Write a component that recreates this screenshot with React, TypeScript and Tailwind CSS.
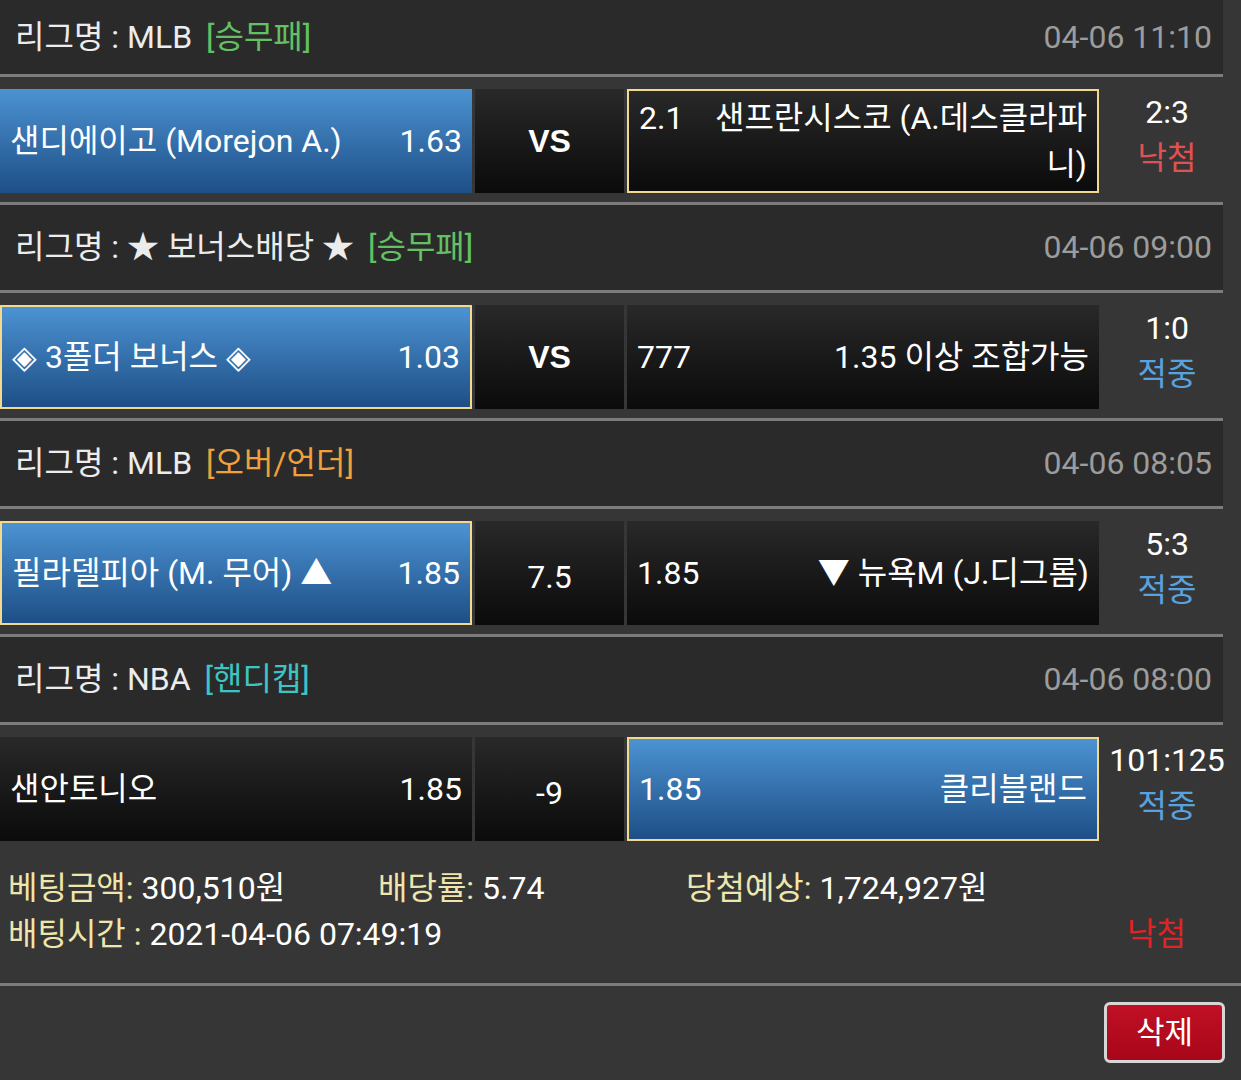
import React from 'react';

type Cell = { left: React.ReactNode; right: React.ReactNode; blue?: boolean; picked?: boolean; top?: boolean };

type Match = {
  league: string;
  tag: string;
  tagColor: string;
  date: string;
  home: Cell;
  mid: string;
  midBold?: boolean;
  away: Cell;
  score: string;
  result: string;
  resultColor: string;
};

const matches: Match[] = [
  {
    league: 'MLB',
    tag: '[승무패]',
    tagColor: 'text-[#62c162]',
    date: '04-06 11:10',
    home: { left: '샌디에이고 (Morejon A.)', right: '1.63', blue: true },
    mid: 'VS',
    midBold: true,
    away: {
      left: '2.1',
      right: (
        <>
          샌프란시스코 (A.데스클라파
          <br />
          니)
        </>
      ),
      picked: true,
      top: true,
    },
    score: '2:3',
    result: '낙첨',
    resultColor: 'text-[#e05252]',
  },
  {
    league: '★ 보너스배당 ★',
    tag: '[승무패]',
    tagColor: 'text-[#62c162]',
    date: '04-06 09:00',
    home: { left: '◈ 3폴더 보너스 ◈', right: '1.03', blue: true, picked: true },
    mid: 'VS',
    midBold: true,
    away: { left: '777', right: '1.35 이상 조합가능' },
    score: '1:0',
    result: '적중',
    resultColor: 'text-[#5aa2de]',
  },
  {
    league: 'MLB',
    tag: '[오버/언더]',
    tagColor: 'text-[#f0a03c]',
    date: '04-06 08:05',
    home: { left: '필라델피아 (M. 무어) ▲', right: '1.85', blue: true, picked: true },
    mid: '7.5',
    away: { left: '1.85', right: '▼ 뉴욕M (J.디그롬)' },
    score: '5:3',
    result: '적중',
    resultColor: 'text-[#5aa2de]',
  },
  {
    league: 'NBA',
    tag: '[핸디캡]',
    tagColor: 'text-[#3fc4c4]',
    date: '04-06 08:00',
    home: { left: '샌안토니오', right: '1.85' },
    mid: '-9',
    away: { left: '1.85', right: '클리블랜드', blue: true, picked: true },
    score: '101:125',
    result: '적중',
    resultColor: 'text-[#5aa2de]',
  },
];

function BetCell({ cell }: { cell: Cell }) {
  const bg = cell.blue
    ? 'bg-gradient-to-b from-[#4c93d3] to-[#1e4f86]'
    : 'bg-gradient-to-b from-[#292929] to-[#0b0b0b]';
  const border = cell.picked ? 'border-2 border-[#f2d98e]' : '';
  return (
    <div className={`w-[472px] h-full flex items-center px-[10px] ${bg} ${border}`}>
      <div className={`flex w-full justify-between ${cell.top ? 'items-start' : 'items-center'}`}>
        <span className="whitespace-nowrap">{cell.left}</span>
        <span className="text-right">{cell.right}</span>
      </div>
    </div>
  );
}

export default function App() {
  return (
    <div className="min-h-screen bg-[#363636] text-white text-[32px] leading-[1.45] font-['Roboto','Noto_Sans_CJK_KR',sans-serif]">
      {matches.map((m, i) => (
        <div key={i}>
          <div
            className={`w-[1223px] bg-[#2a2a2a] flex items-center justify-between pl-[15px] pr-[11px] ${
              i === 0 ? 'h-[74px]' : 'h-[85px]'
            }`}
          >
            <div className="text-[#ececec]">
              리그명 : {m.league} <span className={`ml-1.5 ${m.tagColor}`}>{m.tag}</span>
            </div>
            <div className="text-[#9c9c9c]">{m.date}</div>
          </div>
          <div className="w-[1223px] h-[3px] bg-[#7c7c7c]" />
          <div className="h-[125px] pt-[12px] pb-[9px] flex">
            <div className="flex gap-[3px] h-full">
              <BetCell cell={m.home} />
              <div className="w-[149px] h-full flex items-center justify-center bg-gradient-to-b from-[#292929] to-[#0b0b0b]">
                <span className={m.midBold ? 'font-bold font-["Liberation_Sans",sans-serif]' : 'mt-2'}>{m.mid}</span>
              </div>
              <BetCell cell={m.away} />
            </div>
            <div className="flex-1 pr-[6px] flex flex-col items-center justify-center pb-[12px]">
              <div className="whitespace-nowrap">{m.score}</div>
              <div className={m.resultColor}>{m.result}</div>
            </div>
          </div>
          {i < matches.length - 1 && <div className="w-[1223px] h-[3px] bg-[#7c7c7c]" />}
        </div>
      ))}

      <div className="h-[133px] pl-[8px] pt-[15px]">
        <div className="flex">
          <div className="w-[370px]">
            <span className="text-[#efe6ad]">베팅금액:</span> 300,510원
          </div>
          <div className="w-[308px]">
            <span className="text-[#efe6ad]">배당률:</span> 5.74
          </div>
          <div>
            <span className="text-[#efe6ad]">당첨예상:</span> 1,724,927원
          </div>
        </div>
        <div className="flex justify-between pr-[55px]">
          <div>
            <span className="text-[#efe6ad]">배팅시간 :</span> 2021-04-06 07:49:19
          </div>
          <div className="text-[#e12323]">낙첨</div>
        </div>
      </div>
      <div className="h-[3px] bg-[#7c7c7c]" />
      <div className="flex justify-end pt-[16px] pr-[16px]">
        <button className="w-[121px] h-[61px] rounded-md border-[3px] border-[#d6d6d6] bg-gradient-to-b from-[#c01024] to-[#a8061a] text-white text-[31px] leading-none">
          삭제
        </button>
      </div>
    </div>
  );
}
